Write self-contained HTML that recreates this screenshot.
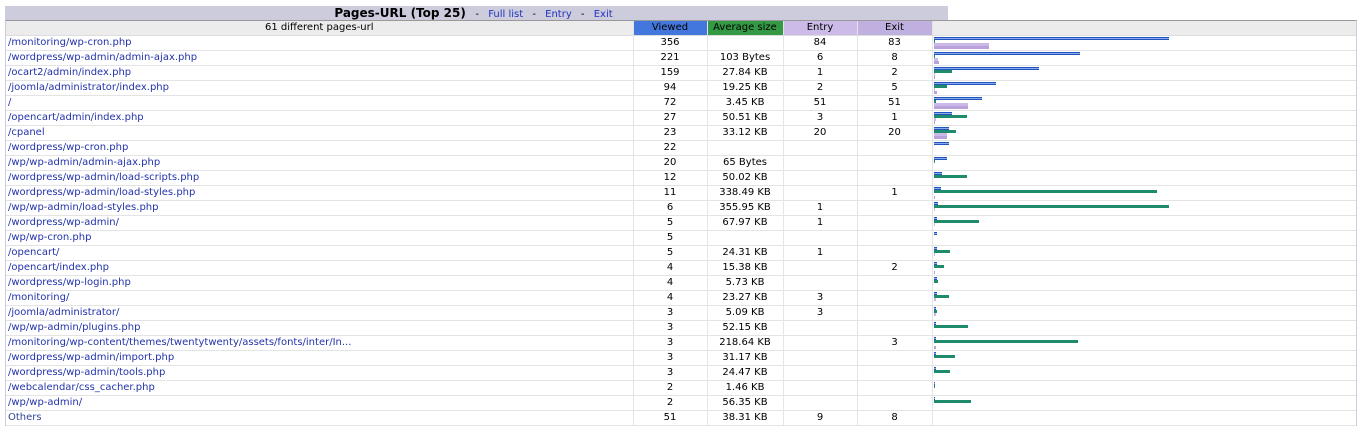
<!DOCTYPE html>
<html><head><meta charset="utf-8">
<style>
body{margin:0;background:#fff;width:1363px;height:436px;overflow:hidden;font-family:"DejaVu Sans","Liberation Sans",sans-serif;font-size:10px;color:#000}
#title{position:absolute;left:5px;top:6px;width:943px;height:14px;background:#ccccdd;text-align:center;line-height:14px}
#title b{font-size:12px;font-family:"DejaVu Sans",sans-serif}
#title a{color:#2233bb;text-decoration:none;margin:0 6px}
#box{position:absolute;left:5px;top:20px;width:1350px;height:404px;border:1px solid #ccccdd;border-top:1px solid #999;}
table{border-collapse:collapse;table-layout:fixed;position:absolute;left:0;top:0}
td{height:14px;padding:0;border-bottom:1px solid #e4e4e4;border-left:1px solid #e4e4e4;text-align:center;white-space:nowrap;overflow:hidden;line-height:14px}
td.u{text-align:left;padding-left:2px;color:#2233aa;border-left:none}
tr.h td{background:#ececec;border-bottom:1px solid #ddd}
tr.h td.v{background:#4477dd}
tr.h td.s{background:#339944}
tr.h td.e{background:#ccbbe8}
tr.h td.x{background:#c0b0e0}
td.g{position:relative;text-align:left}
.g i{position:absolute;left:1px;height:3px;display:block}
.g i.a{top:1px;background:linear-gradient(#2255bb 0,#2255bb 1px,#88aaee 1px,#88aaee 2px,#2255bb 2px)}
.g i.b{top:4px;background:#1e8c6c}
.g i.c{top:7px;background:#c9b8e8}
.g i.d{top:10px;background:#b9a2da}
</style></head><body>
<div id="title"><b>Pages-URL (Top 25)</b> &nbsp; - <a>Full list</a> - <a>Entry</a> - <a>Exit</a></div>
<div id="box">
<table>
<colgroup><col style="width:627px"><col style="width:74px"><col style="width:76px"><col style="width:74px"><col style="width:75px"><col style="width:424px"></colgroup>
<tr class="h"><td style="border-left:none">61 different pages-url</td><td class="v">Viewed</td><td class="s">Average size</td><td class="e">Entry</td><td class="x">Exit</td><td></td></tr>
<tr><td class="u">/monitoring/wp-cron.php</td><td>356</td><td></td><td>84</td><td>83</td><td class="g"><i class="a" style="width:235px"></i><i class="b" style="width:1px"></i><i class="c" style="width:55px"></i><i class="d" style="width:55px"></i></td></tr>
<tr><td class="u">/wordpress/wp-admin/admin-ajax.php</td><td>221</td><td>103 Bytes</td><td>6</td><td>8</td><td class="g"><i class="a" style="width:146px"></i><i class="b" style="width:1px"></i><i class="c" style="width:4px"></i><i class="d" style="width:5px"></i></td></tr>
<tr><td class="u">/ocart2/admin/index.php</td><td>159</td><td>27.84 KB</td><td>1</td><td>2</td><td class="g"><i class="a" style="width:105px"></i><i class="b" style="width:18px"></i><i class="c" style="width:1px"></i><i class="d" style="width:1px"></i></td></tr>
<tr><td class="u">/joomla/administrator/index.php</td><td>94</td><td>19.25 KB</td><td>2</td><td>5</td><td class="g"><i class="a" style="width:62px"></i><i class="b" style="width:13px"></i><i class="c" style="width:1px"></i><i class="d" style="width:3px"></i></td></tr>
<tr><td class="u">/</td><td>72</td><td>3.45 KB</td><td>51</td><td>51</td><td class="g"><i class="a" style="width:48px"></i><i class="b" style="width:2px"></i><i class="c" style="width:34px"></i><i class="d" style="width:34px"></i></td></tr>
<tr><td class="u">/opencart/admin/index.php</td><td>27</td><td>50.51 KB</td><td>3</td><td>1</td><td class="g"><i class="a" style="width:18px"></i><i class="b" style="width:33px"></i><i class="c" style="width:2px"></i><i class="d" style="width:1px"></i></td></tr>
<tr><td class="u">/cpanel</td><td>23</td><td>33.12 KB</td><td>20</td><td>20</td><td class="g"><i class="a" style="width:15px"></i><i class="b" style="width:22px"></i><i class="c" style="width:13px"></i><i class="d" style="width:13px"></i></td></tr>
<tr><td class="u">/wordpress/wp-cron.php</td><td>22</td><td></td><td></td><td></td><td class="g"><i class="a" style="width:15px"></i></td></tr>
<tr><td class="u">/wp/wp-admin/admin-ajax.php</td><td>20</td><td>65 Bytes</td><td></td><td></td><td class="g"><i class="a" style="width:13px"></i><i class="b" style="width:1px"></i></td></tr>
<tr><td class="u">/wordpress/wp-admin/load-scripts.php</td><td>12</td><td>50.02 KB</td><td></td><td></td><td class="g"><i class="a" style="width:8px"></i><i class="b" style="width:33px"></i></td></tr>
<tr><td class="u">/wordpress/wp-admin/load-styles.php</td><td>11</td><td>338.49 KB</td><td></td><td>1</td><td class="g"><i class="a" style="width:7px"></i><i class="b" style="width:223px"></i><i class="d" style="width:1px"></i></td></tr>
<tr><td class="u">/wp/wp-admin/load-styles.php</td><td>6</td><td>355.95 KB</td><td>1</td><td></td><td class="g"><i class="a" style="width:4px"></i><i class="b" style="width:235px"></i><i class="c" style="width:1px"></i></td></tr>
<tr><td class="u">/wordpress/wp-admin/</td><td>5</td><td>67.97 KB</td><td>1</td><td></td><td class="g"><i class="a" style="width:3px"></i><i class="b" style="width:45px"></i><i class="c" style="width:1px"></i></td></tr>
<tr><td class="u">/wp/wp-cron.php</td><td>5</td><td></td><td></td><td></td><td class="g"><i class="a" style="width:3px"></i></td></tr>
<tr><td class="u">/opencart/</td><td>5</td><td>24.31 KB</td><td>1</td><td></td><td class="g"><i class="a" style="width:3px"></i><i class="b" style="width:16px"></i><i class="c" style="width:1px"></i></td></tr>
<tr><td class="u">/opencart/index.php</td><td>4</td><td>15.38 KB</td><td></td><td>2</td><td class="g"><i class="a" style="width:3px"></i><i class="b" style="width:10px"></i><i class="d" style="width:1px"></i></td></tr>
<tr><td class="u">/wordpress/wp-login.php</td><td>4</td><td>5.73 KB</td><td></td><td></td><td class="g"><i class="a" style="width:3px"></i><i class="b" style="width:4px"></i></td></tr>
<tr><td class="u">/monitoring/</td><td>4</td><td>23.27 KB</td><td>3</td><td></td><td class="g"><i class="a" style="width:3px"></i><i class="b" style="width:15px"></i><i class="c" style="width:2px"></i></td></tr>
<tr><td class="u">/joomla/administrator/</td><td>3</td><td>5.09 KB</td><td>3</td><td></td><td class="g"><i class="a" style="width:2px"></i><i class="b" style="width:3px"></i><i class="c" style="width:2px"></i></td></tr>
<tr><td class="u">/wp/wp-admin/plugins.php</td><td>3</td><td>52.15 KB</td><td></td><td></td><td class="g"><i class="a" style="width:2px"></i><i class="b" style="width:34px"></i></td></tr>
<tr><td class="u">/monitoring/wp-content/themes/twentytwenty/assets/fonts/inter/In...</td><td>3</td><td>218.64 KB</td><td></td><td>3</td><td class="g"><i class="a" style="width:2px"></i><i class="b" style="width:144px"></i><i class="d" style="width:2px"></i></td></tr>
<tr><td class="u">/wordpress/wp-admin/import.php</td><td>3</td><td>31.17 KB</td><td></td><td></td><td class="g"><i class="a" style="width:2px"></i><i class="b" style="width:21px"></i></td></tr>
<tr><td class="u">/wordpress/wp-admin/tools.php</td><td>3</td><td>24.47 KB</td><td></td><td></td><td class="g"><i class="a" style="width:2px"></i><i class="b" style="width:16px"></i></td></tr>
<tr><td class="u">/webcalendar/css_cacher.php</td><td>2</td><td>1.46 KB</td><td></td><td></td><td class="g"><i class="a" style="width:1px"></i><i class="b" style="width:1px"></i></td></tr>
<tr><td class="u">/wp/wp-admin/</td><td>2</td><td>56.35 KB</td><td></td><td></td><td class="g"><i class="a" style="width:1px"></i><i class="b" style="width:37px"></i></td></tr>
<tr><td class="u" style="color:#334499">Others</td><td>51</td><td>38.31 KB</td><td>9</td><td>8</td><td class="g"></td></tr>
</table>
</div>
</body></html>
